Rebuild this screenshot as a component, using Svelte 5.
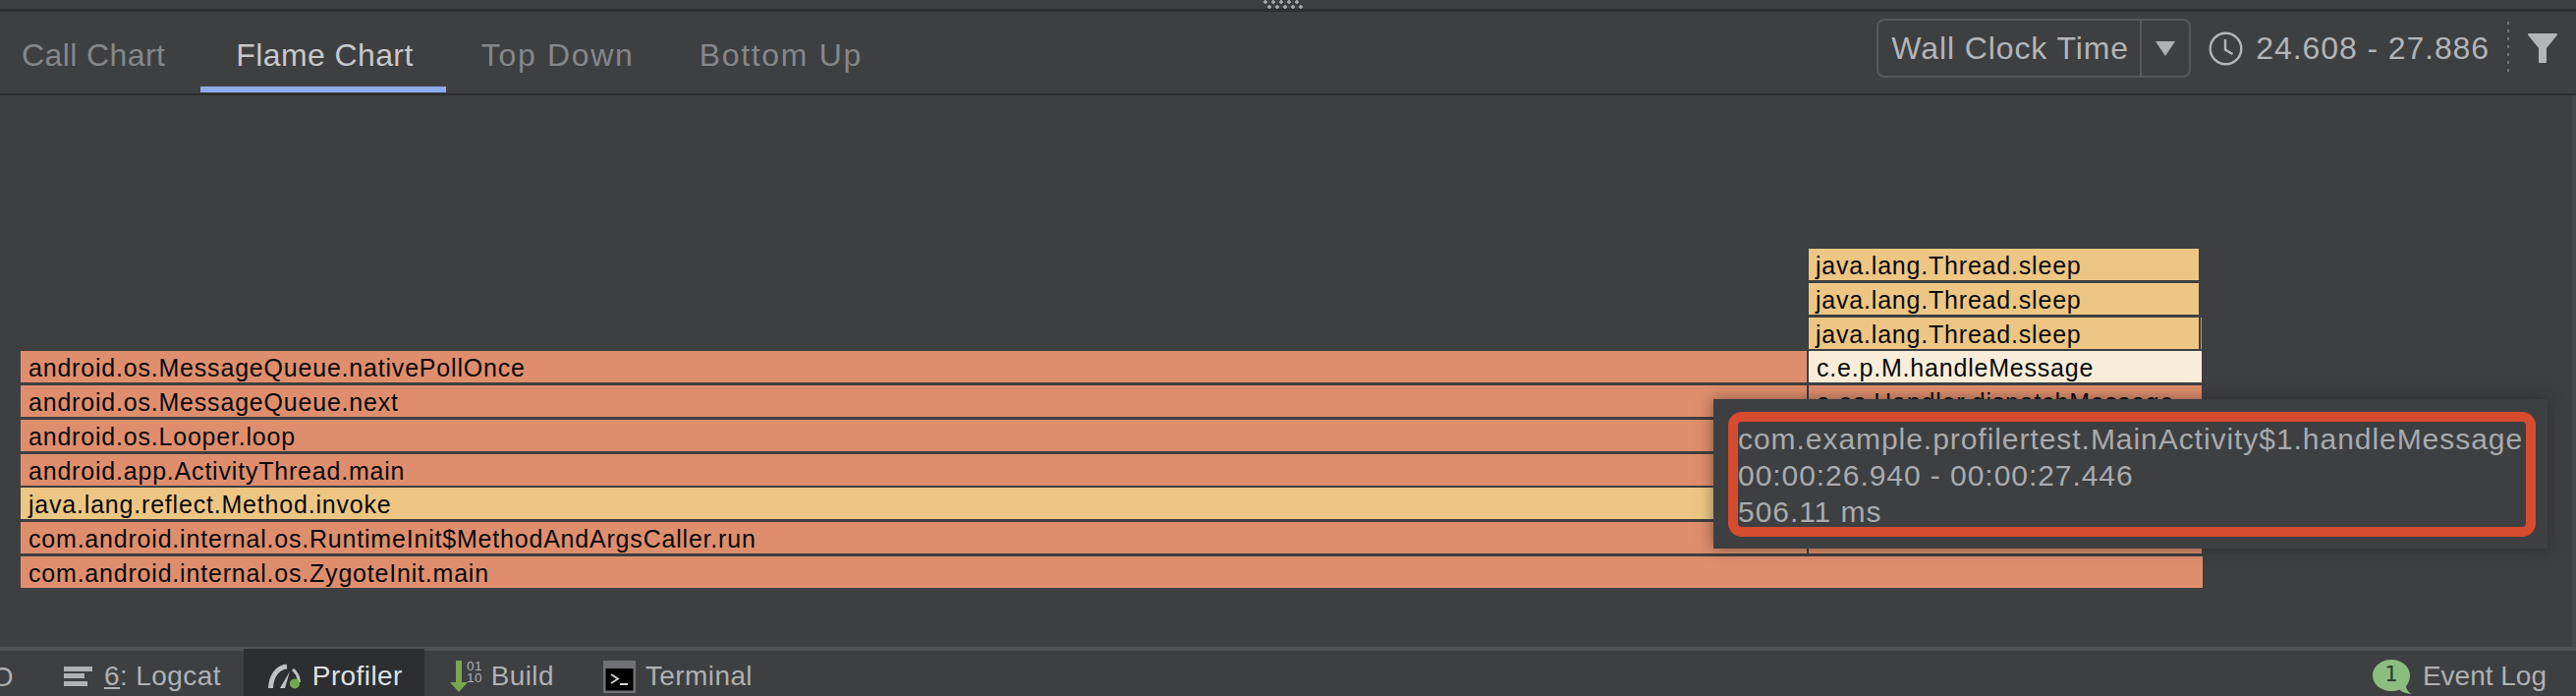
<script>
  const rows = [
    { t: 'android.os.MessageQueue.nativePollOnce', c: 'o' },
    { t: 'android.os.MessageQueue.next', c: 'o' },
    { t: 'android.os.Looper.loop', c: 'o' },
    { t: 'android.app.ActivityThread.main', c: 'o' },
    { t: 'java.lang.reflect.Method.invoke', c: 'y' },
    { t: 'com.android.internal.os.RuntimeInit$MethodAndArgsCaller.run', c: 'o' }
  ];
  const right = [
    { t: 'c.e.p.M.handleMessage', c: 'w' },
    { t: 'a.os.Handler.dispatchMessage', c: 'o' },
    { t: '', c: 'o' },
    { t: '', c: 'o' },
    { t: '', c: 'o' },
    { t: '', c: 'o' }
  ];
</script>

<div class="app">
  <div class="topgap"><span class="grip"></span></div>
  <header class="tabs">
    <nav class="tablist">
      <span class="tab first">Call Chart</span>
      <span class="tab active">Flame Chart</span>
      <span class="tab wide">Top Down</span>
      <span class="tab wide last">Bottom Up</span>
    </nav>
    <div class="tools">
      <div class="combo">
        <span class="combotext">Wall Clock Time</span>
        <span class="arrow"><svg width="20" height="15" viewBox="0 0 20 15"><path d="M0 0H20L10 15Z" fill="#afb1b3"/></svg></span>
      </div>
      <svg class="clock" width="35" height="35" viewBox="0 0 35 35" fill="none" stroke="#b3b5b7" stroke-width="2.4"><circle cx="17.5" cy="17.5" r="15.8"/><path d="M17 8V18.5L24.5 23"/></svg>
      <span class="range">24.608 - 27.886</span>
      <span class="dots"></span>
      <svg class="filter" width="30" height="30" viewBox="0 0 30 30"><path d="M1 0H29C30 0 30.3 1 29.8 1.800L19 15V29C19 29.600 18.600 30 18 30H12C11.400 30 11 29.600 11 29V15L.2 1.800C-.3 1 0 0 1 0Z" fill="#b3b5b7"/></svg>
    </div>
  </header>

  <main class="chart">
    <div class="flame">
      <div class="upper">
        <div class="col-left">
          {#each rows as r}
            <div class="bar {r.c}">{r.t}</div>
          {/each}
        </div>
        <div class="col-right">
          <div class="bar y sleep">java.lang.Thread.sleep</div>
          <div class="bar y sleep">java.lang.Thread.sleep</div>
          <div class="bar y sleep tick">java.lang.Thread.sleep</div>
          {#each right as r}
            <div class="bar {r.c}">{r.t}</div>
          {/each}
        </div>
      </div>
      <div class="bar o">com.android.internal.os.ZygoteInit.main</div>
    </div>
    <div class="scrollstrip"></div>
    <div class="tooltip">
      <div class="mark">
        <div class="lines">
          <div>com.example.profilertest.MainActivity$1.handleMessage</div>
          <div>00:00:26.940 - 00:00:27.446</div>
          <div>506.11 ms</div>
        </div>
      </div>
    </div>
  </main>

  <footer class="status">
    <span class="cut">O</span>
    <span class="item logcat">
      <svg width="29" height="20" viewBox="0 0 29 20" fill="#afb1b3"><rect x="0" y="0" width="29" height="5"/><rect x="0" y="7" width="21" height="5"/><rect x="0" y="15" width="24" height="5"/></svg>
      <span><u>6</u>: Logcat</span>
    </span>
    <span class="item profiler">
      <svg width="33" height="26" viewBox="0 0 33 26" fill="none">
        <path d="M2.500 25C3 13 9 4 19 3" stroke="#bfc1c3" stroke-width="5"/>
        <path d="M12 25L22 8L17 25Z" fill="#bfc1c3"/>
        <path d="M25 6C29 9 31 13 31.500 19" stroke="#bfc1c3" stroke-width="3"/>
        <circle cx="27" cy="20.500" r="5" fill="#6da84e"/>
      </svg>
      <span>Profiler</span>
    </span>
    <span class="item build">
      <svg class="buildicon" width="32" height="32" viewBox="0 0 32 32">
        <path d="M5 0H11V22H17L8 32L-1 22H5Z" fill="#7ca54f"/>
        <text x="16" y="10" font-size="13.500" fill="#afb1b3" font-family="Liberation Sans, sans-serif">01</text>
        <text x="16" y="22" font-size="13.500" fill="#afb1b3" font-family="Liberation Sans, sans-serif">10</text>
      </svg>
      <span>Build</span>
    </span>
    <span class="item terminal">
      <svg width="33" height="33" viewBox="0 0 33 33">
        <rect width="33" height="33" fill="#6f7174"/>
        <rect x="2.500" y="8" width="28" height="22.500" fill="#000"/>
        <path d="M8 14L15 18.500L8 23" fill="none" stroke="#d5d5d5" stroke-width="1.800"/>
        <rect x="17" y="23" width="8" height="2" fill="#d5d5d5"/>
      </svg>
      <span>Terminal</span>
    </span>
    <span class="spacer"></span>
    <span class="item event">
      <span class="badge"><svg width="40" height="35" viewBox="0 0 40 35"><path d="M19 0C8.500 0 0 7 0 16C0 25 8.500 32 19 32C22 32 25 31.500 27 30.500C30 33 34 34.500 40 35C36 33 34.500 30.500 34 27C36.500 24 38 20.500 38 16C38 7 29.500 0 19 0Z" fill="#8bbd7f"/></svg><b>1</b></span>
      <span>Event Log</span>
    </span>
  </footer>
</div>

<style>
  :global(body) { margin: 0; background: #3e3f41; }
  .app { width: 2622px; height: 708px; display: flex; flex-direction: column; background: #3e3f41; font-family: "Liberation Sans", sans-serif; overflow: hidden; }
  .topgap { height: 9px; flex: none; border-bottom: 3px solid #2c2d2f; display: flex; justify-content: center; }
  .grip { width: 40px; height: 9px; margin-left: -10px; background-image:
      radial-gradient(circle at 2px 2px, #a8a8a8 1.5px, transparent 2px),
      radial-gradient(circle at 6px 7px, #a8a8a8 1.5px, transparent 2px);
    background-size: 8px 9px; }
  .tabs { height: 83px; flex: none; display: flex; justify-content: space-between; border-bottom: 2px solid #2c2d2f; }
  .tablist { display: flex; }
  .tab { color: #85878a; font-size: 32px; letter-spacing: .4px; padding: 26px 33px 0 36px; height: 82px; box-sizing: border-box; white-space: nowrap; }
  .tab.wide { letter-spacing: 1.7px; }
  .tab.first { padding-left: 22px; padding-right: 36px; }
  .tab.last { padding-left: 33px; }
  .tab.active { color: #c6c8ca; border-bottom: 6px solid #8cabed; }
  .tools { display: flex; align-items: center; padding: 0 19px 9px 0; color: #b3b5b7; font-size: 32px; letter-spacing: .9px; }
  .combo { display: flex; width: 320px; height: 60px; border: 2px solid #57595c; border-radius: 8px; align-items: center; box-sizing: border-box; }
  .combotext { width: 268px; box-sizing: border-box; padding-left: 13px; border-right: 2px solid #57595c; height: 100%; display: flex; align-items: center; white-space: nowrap; }
  .arrow { flex: 1; display: flex; justify-content: center; }
  .clock { margin-left: 18px; }
  .range { margin-left: 13px; white-space: nowrap; }
  .dots { margin-left: 18px; width: 2px; height: 54px; background: repeating-linear-gradient(180deg, #737578 0 3px, transparent 3px 8px); }
  .filter { margin-left: 19px; }
  .chart { flex: 1; position: relative; min-height: 0; padding: 156px 0 0 21px; }
  .flame { width: 2221px; display: flex; flex-direction: column; gap: 2.75px; }
  .upper { display: flex; align-items: flex-end; gap: 2px; }
  .col-left { width: 1818px; display: flex; flex-direction: column; gap: 2.75px; }
  .col-right { width: 400px; display: flex; flex-direction: column; gap: 2.75px; }
  .bar { height: 32px; flex: none; box-sizing: border-box; padding-left: 8px; color: #0a0a0a; font-size: 25px; letter-spacing: .8px; line-height: 34px; white-space: nowrap; overflow: hidden; }
  .sleep { width: 397px; padding-left: 7px; }
  .tick { box-shadow: 2px 0 0 #3e3f41, 3px 0 0 #df8e6d; }
  .o { background: #df8e6d; }
  .y { background: #edc683; }
  .w { background: #f9edd9; }
  .scrollstrip { position: absolute; right: 0; top: 0; bottom: 0; width: 4px; background: #47494c; }
  .tooltip { position: absolute; left: 1744px; top: 309px; width: 849px; height: 152px; background: #3e3f41; box-shadow: 0 0 14px rgba(25,25,25,.5); padding: 13px 0 0 15px; box-sizing: border-box; }
  .mark { width: 822px; height: 127px; box-sizing: border-box; border: 10px solid #d74b2f; border-radius: 14px; color: #a9abad; font-size: 30px; letter-spacing: .95px; line-height: 37px; white-space: nowrap; }
  .lines { margin-top: -1px; }
  .status { height: 50px; flex: none; border-top: 4px solid #505154; background: #3e3f41; display: flex; align-items: stretch; color: #afb1b3; font-size: 28px; letter-spacing: .4px; box-sizing: border-box; }
  .cut { width: 14px; overflow: hidden; direction: rtl; line-height: 54px; }
  .item { display: flex; align-items: center; gap: 12px; white-space: nowrap; padding-top: 6px; box-sizing: border-box; }
  .logcat { margin-left: 51px; }
  .profiler { margin-left: 23px; margin-top: -2px; background: #2d2e30; padding: 8px 22px 0 25px; color: #dfe1e3; gap: 12px; }
  .build { margin-left: 27px; gap: 9px; }
  .buildicon { overflow: visible; }
  .terminal { margin-left: 50px; gap: 10px; }
  .spacer { flex: 1; }
  .event { margin-right: 30px; gap: 11px; letter-spacing: 0; }
  .badge { position: relative; width: 40px; height: 35px; }
  .badge b { position: absolute; left: 12px; top: 2px; font-family: "DejaVu Sans Mono", monospace; font-weight: 400; font-size: 22px; color: #2d3b2c; }
</style>
